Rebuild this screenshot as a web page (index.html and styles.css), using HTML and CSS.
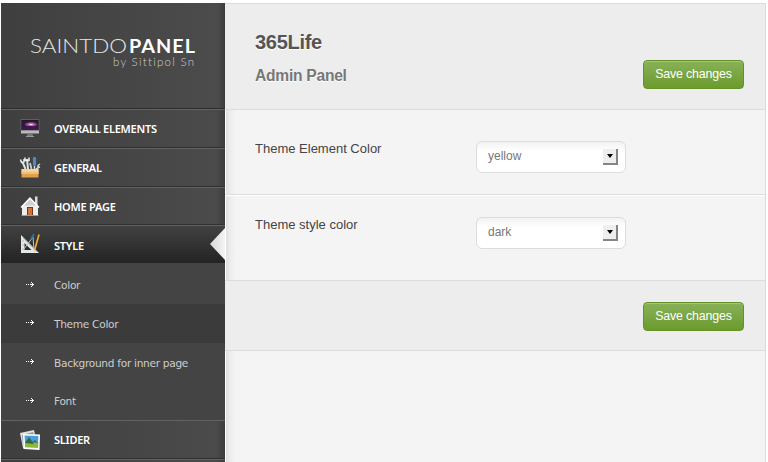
FILE: index.html
```html
<!DOCTYPE html>
<html lang="en">
<head>
<meta charset="utf-8">
<title>365Life Admin Panel</title>
<link rel="stylesheet" href="styles.css">
</head>
<body>
<div class="panel">
  <aside class="sidebar">
    <div class="brand">
      <svg width="224" height="104" viewBox="0 0 224 104">
        <text class="logo-light" x="29" y="49.5" textLength="97" lengthAdjust="spacingAndGlyphs">SAINTDO</text>
        <text class="logo-bold" x="128" y="49.5" textLength="66">PANEL</text>
        <text class="logo-by" x="112" y="63" textLength="81">by Sittipol Sn</text>
      </svg>
    </div>
    <nav>
      <a class="item">
        <svg class="icon" viewBox="0 0 22 22">
          <defs><radialGradient id="aurora"><stop offset="0" stop-color="#fff"/><stop offset=".35" stop-color="#d763c6"/><stop offset="1" stop-color="#35183f"/></radialGradient></defs>
          <path d="M2 1.500h18v11H2z" fill="#19151e" stroke="#77727a" stroke-width=".7"/>
          <path d="M3 2.500h16v9H3z" fill="#2d1838"/>
          <ellipse cx="12" cy="6.500" rx="7" ry="2.800" fill="url(#aurora)"/>
          <path d="M3 9q8-2 16 0v3H3z" fill="#3c1a4b"/>
          <path d="M2 12.500h18v3H2z" fill="#b9bbbc"/>
          <path d="M8.500 15.500h5l.7 3H7.800z" fill="#777"/><path d="M7 18h8v1H7z" fill="#999"/>
        </svg><span class="t1">OVERALL ELEMENTS</span></a>
      <a class="item">
        <svg class="icon" viewBox="0 0 22 22">
          <path d="M3.500 5l3 7M8 2l1 10" fill="none" stroke="#dfe3e5" stroke-width="2"/>
          <path d="M1.500 2.500l1 3 2.500-.5V2M6 .5v3h4v-3" fill="none" stroke="#eef0f1" stroke-width="1.500"/>
          <path d="M11 6l1.500 6" stroke="#c7ced2" stroke-width="1.800"/>
          <path d="M15.500 1.500v6" stroke="#5188c5" stroke-width="3.200" stroke-linecap="round"/>
          <path d="M15.500 9v3M21 7l-2 1.500V11l-2 1M21 10l-2 .5" fill="none" stroke="#ccd7df" stroke-width="1.500"/>
          <path d="M2.500 12h17v8.500h-17z" fill="#dfa14e"/>
          <path d="M2.500 12h17v3h-17z" fill="#f7d591"/><path d="M2 16h18" stroke="#ffe0a0"/>
        </svg><span class="t2">GENERAL</span></a>
      <a class="item home">
        <svg class="icon" viewBox="0 0 22 22">
          <path d="M16 1.500h2.500V10H16z" fill="#ddd"/><path d="M3 11l8-8 8 8v10H3z" fill="#eeeeec"/>
          <path d="M4.500 10.500L11 4l7 6.500z" fill="#ccd1d2"/><path d="M2 12.500L11 3l9 9.500" fill="none" stroke="#fff" stroke-width="1.300"/>
          <path d="M8 12h6v8.500H8z" fill="#70371f"/><path d="M9 13h4v7.500H9z" fill="#cf743c"/><path d="M2.500 20.500h17" stroke="#9e9a94"/>
        </svg><span class="t3">HOME PAGE</span></a>
      <a class="item active">
        <svg class="icon" viewBox="0 0 22 22">
          <path d="M2 2v18h18zM5.500 10v7h7z" fill="#e6e8e8" fill-rule="evenodd"/>
          <path d="M4 5l14 14M3 8h2M3 12h2M3 16h2" stroke="#a4a8a9" stroke-width=".7"/>
          <path d="M14 4l-9 12M14 4l1 13" fill="none" stroke="#b8c4ce"/>
          <path d="M15 1l-3 5" stroke="#2e6f9d" stroke-width="2"/>
          <path d="M20 1.500l-4.500 16" stroke="#edae31" stroke-width="1.700"/><path d="M15.600 17l-.6 2.500" stroke="#f6ddb3"/>
        </svg><span class="t4">STYLE</span><i class="notch"></i></a>
      <div class="submenu">
        <a class="sub"><svg class="arrow" viewBox="0 0 9 5" shape-rendering="crispEdges"><path d="M0 2h1v1H0zM2 2h1v1H2zM4 2h4v1H4zM6 1h1v3H6zM5 0h1v1H5zM5 4h1v1H5z"/></svg><span class="s1">Color</span></a>
        <a class="sub current"><svg class="arrow" viewBox="0 0 9 5" shape-rendering="crispEdges"><path d="M0 2h1v1H0zM2 2h1v1H2zM4 2h4v1H4zM6 1h1v3H6zM5 0h1v1H5zM5 4h1v1H5z"/></svg><span class="s2">Theme Color</span></a>
        <a class="sub"><svg class="arrow" viewBox="0 0 9 5" shape-rendering="crispEdges"><path d="M0 2h1v1H0zM2 2h1v1H2zM4 2h4v1H4zM6 1h1v3H6zM5 0h1v1H5zM5 4h1v1H5z"/></svg><span class="s3">Background for inner page</span></a>
        <a class="sub"><svg class="arrow" viewBox="0 0 9 5" shape-rendering="crispEdges"><path d="M0 2h1v1H0zM2 2h1v1H2zM4 2h4v1H4zM6 1h1v3H6zM5 0h1v1H5zM5 4h1v1H5z"/></svg><span class="s4">Font</span></a>
      </div>
      <a class="item">
        <svg class="icon" viewBox="0 0 22 22">
          <path d="M1 4l14-3 3 14-14 4z" fill="#e1e5e2"/><path d="M3 6l11-3 2 5-12 9z" fill="#8d9f98"/>
          <path d="M4 5l17 .5-.5 15.500-16-1z" fill="#fff"/><path d="M5.500 6.500l14 .5-.5 8-13-.5z" fill="#4b9edc"/>
          <path d="M6 13l13.500.5-.5 5.500-13-.7z" fill="#8db83c"/><path d="M6 14l4-6 5 7z" fill="#326941"/><path d="M13 13l3-2 3 3z" fill="#326b77"/>
        </svg><span class="t5">SLIDER</span></a>
      <a class="item"></a>
    </nav>
  </aside>
  <main class="content">
    <header class="head">
      <div><h1>365Life</h1><h2>Admin Panel</h2></div>
      <button class="save">Save changes</button>
    </header>
    <section class="row first"><label>Theme Element Color</label><div class="select"><span>yellow</span><b></b></div></section>
    <section class="row second"><label>Theme style color</label><div class="select"><span>dark</span><b></b></div></section>
    <footer class="foot"><button class="save">Save changes</button></footer>
  </main>
</div>
</body>
</html>
```
FILE: styles.css
```css
* { box-sizing: border-box; }
body { margin: 0; height: 462px; overflow: hidden; background: #fff; font-family: "Liberation Sans", Arial, sans-serif; }
.panel { display: flex; height: 459px; margin: 3px 2px 0 1px; }
.sidebar { width: 224px; flex: none; overflow: hidden; background: #444; font-family: "DejaVu Sans", Verdana, sans-serif; }
.brand { height: 106px; border-bottom: 1px solid #2d2d2d; background: linear-gradient(90deg, transparent 217px, #3c3c3c 224px), linear-gradient(90deg, #3f3f3f, #4c4c4c); }
.brand svg { display: block; }
.logo-light, .logo-bold { font-family: Lato, sans-serif; fill: #fff; }
.logo-light { font-weight: 300; font-size: 20.5px; fill: #e6e6e6; }
.logo-bold { font-weight: 700; font-size: 19.8px; }
.logo-by { font-family: Lato, sans-serif; font-weight: 300; font-size: 11.5px; fill: #ccc; font-variant-ligatures: none; }
.item { position: relative; display: flex; align-items: center; height: 39px; padding-left: 18px; border-top: 1px solid #626262; border-bottom: 1px solid #303030; background: linear-gradient(90deg, transparent 215px, #3c3c3c 224px), linear-gradient(90deg, #3f3f3f, #4b4b4b); color: #fff; font-family: "Noto Sans", sans-serif; font-size: 11px; font-weight: 600; letter-spacing: -.24px; }
.item.home { height: 38px; }
.icon { width: 22px; height: 22px; margin-right: 13px; flex: none; }
.item span { white-space: nowrap; }
.item.active { height: 38px; background: linear-gradient(#414141, #242424); border-bottom-color: #242424; }
.item.active span { padding-top: 2px; }
.notch { position: absolute; right: 0; top: 2px; width: 15px; height: 32px; background: linear-gradient(90deg, #d9d9d9, #f4f4f4); clip-path: polygon(100% 0, 0 50%, 100% 100%); }
.submenu { height: 157px; background: #444; }
.sub { display: flex; align-items: center; height: 39px; padding-left: 25px; color: #ccc; font-size: 10.6px; letter-spacing: -.3px; white-space: nowrap; }
.sub:first-child { height: 41px; padding-top: 3px; }
.sub:last-child { height: 38px; }
.current { background: #3b3b3b; }
.arrow { width: 9px; height: 5px; margin: 0 19px 2px 0; fill: #fff; flex: none; }
.content { flex: 1; border-top: 1px solid #dcdcdc; border-right: 1px solid #dcdcdc; background: linear-gradient(90deg, #fff 0 1px, #dfdfdf 1px, #ececec 5px, #f4f4f4 11px); }
.head { height: 106px; display: flex; justify-content: space-between; padding: 27px 21px 0 30px; background: #ededed; border-bottom: 1px solid #dcdcdc; }
h1 { margin: 0; font-size: 20px; line-height: 23px; letter-spacing: -.3px; color: #555; text-shadow: 0 1px #fff; }
h2 { margin: 13px 0 0; font-size: 15.6px; line-height: 18px; letter-spacing: -.25px; color: #777; text-shadow: 0 1px #fff; }
.save { width: 101px; height: 29px; margin: 0; padding: 0 0 1px; border: 1px solid #659127; border-radius: 4px; background: linear-gradient(#89b158, #6b9b2d); box-shadow: inset 0 1px #a5c47f; color: #fff; font: 12.4px "Liberation Sans", Arial, sans-serif; letter-spacing: -.15px; }
.head .save { margin-top: 29px; }
.row { display: flex; padding: 31px 0 0 30px; }
.first { height: 85px; border-bottom: 1px solid #dcdcdc; }
.second { height: 85px; padding-top: 21px; border-top: 1px solid #fff; }
.row label { width: 221px; color: #444; font-size: 13px; line-height: 16px; }
.select { width: 150px; height: 32px; display: flex; justify-content: space-between; padding: 7px 7px 0 11px; border: 1px solid #dcdcdc; border-radius: 6px; background: linear-gradient(#f2f2f2, #fff 9px); color: #777; font-size: 12px; line-height: 15px; }
.select b { display: flex; align-items: center; justify-content: center; width: 15px; height: 16px; background: #eee; border: solid #858585; border-width: 0 2px 2px 0; }
.select b::after { content: ""; border: 3.5px solid transparent; border-top: 4px solid #000; border-bottom: 0; }
.foot { height: 71px; display: flex; justify-content: flex-end; padding: 21px 21px 0 0; background: #ededed; border: solid #dcdcdc; border-width: 1px 0; }
```
